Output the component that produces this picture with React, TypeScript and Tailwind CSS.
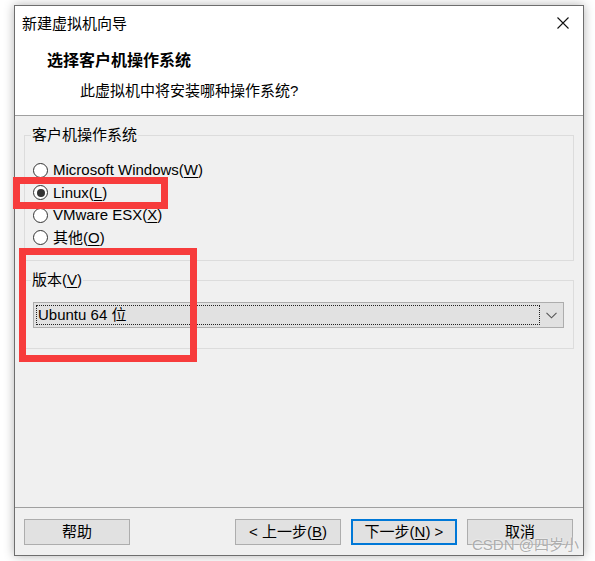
import type { ReactNode } from 'react'

const osOptions = [
  { label: 'Microsoft Windows', key: 'W', checked: false },
  { label: 'Linux', key: 'L', checked: true },
  { label: 'VMware ESX', key: 'X', checked: false },
  { label: '其他', key: 'O', checked: false },
] as const

function Accel({ k }: { k: string }) {
  return (
    <>
      (<span className="underline underline-offset-2">{k}</span>)
    </>
  )
}

function Radio({ checked }: { checked: boolean }) {
  return (
    <span className="flex h-[15px] w-[15px] shrink-0 items-center justify-center rounded-full border border-[#333333] bg-white">
      {checked && <span className="h-[8px] w-[8px] rounded-full bg-[#333333]" />}
    </span>
  )
}

function Button({ children, primary = false }: { children: ReactNode; primary?: boolean }) {
  return (
    <button
      className={
        primary
          ? 'flex h-[26px] w-[106px] items-center justify-center border-2 border-[#0078d7] bg-[#e1e1e1] text-[15px] leading-[20px] text-black'
          : 'flex h-[26px] w-[106px] items-center justify-center border border-[#adadad] bg-[#e1e1e1] text-[15px] leading-[20px] text-black'
      }
    >
      {children}
    </button>
  )
}

export default function App() {
  return (
    <div className="relative h-[561px] w-[595px] overflow-hidden bg-white pl-[14px] pt-[5px] font-['Liberation_Sans','Noto_Sans_CJK_SC',sans-serif] text-black">
      <div className="flex h-[551px] w-[570px] flex-col border border-[#6e6e6e] bg-[#f0f0f0] shadow-[0_0_10px_rgba(0,0,0,0.3)]">
        {/* header */}
        <div className="h-[110px] shrink-0 border-b border-[#a0a0a0] bg-white">
          <div className="flex items-center justify-between pl-[7px] pr-[14px] pt-[8px]">
            <span className="text-[15px] leading-[20px]">新建虚拟机向导</span>
            <svg width="12" height="12" viewBox="0 0 12 12" className="mt-[-2px]">
              <path d="M0.5 0.5 L11.5 11.5 M11.5 0.5 L0.5 11.5" stroke="#111" strokeWidth="1.1" fill="none" />
            </svg>
          </div>
          <div className="mt-[17px] pl-[32px] text-[16px] font-bold leading-[20px]">选择客户机操作系统</div>
          <div className="mt-[10px] pl-[65px] text-[15px] leading-[20px]">此虚拟机中将安装哪种操作系统?</div>
        </div>

        {/* body */}
        <div className="flex flex-1 flex-col px-[9px] pt-[9px]">
          <fieldset className="h-[136px] border border-[#dcdcdc]">
            <legend className="ml-[6px] px-[1px] text-[15px] leading-[20px]">客户机操作系统</legend>
            <div className="mt-[14px] flex flex-col pl-[8px]">
              {osOptions.map((o) => (
                <div key={o.key} className="flex h-[22.5px] items-center gap-[5px] text-[15px] leading-[20px]">
                  <Radio checked={o.checked} />
                  <span>
                    {o.label}
                    <Accel k={o.key} />
                  </span>
                </div>
              ))}
            </div>
          </fieldset>

          <fieldset className="mt-[9px] h-[79px] border border-[#dcdcdc]">
            <legend className="ml-[6px] px-[1px] text-[15px] leading-[20px]">
              版本<Accel k="V" />
            </legend>
            <div className="ml-[8px] mr-[9px] mt-[12px] flex h-[26px] items-center border border-[#adadad] bg-[#e1e1e1] pl-[2px]">
              <div className="flex h-[20px] flex-1 items-center border border-dotted border-[#222] pl-[1px] text-[15px] leading-[20px]">
                Ubuntu 64 位
              </div>
              <div className="flex w-[23px] items-center justify-center">
                <svg width="11" height="7" viewBox="0 0 11 7">
                  <path d="M0.5 0.8 L5.5 5.8 L10.5 0.8" stroke="#555" strokeWidth="1.1" fill="none" />
                </svg>
              </div>
            </div>
          </fieldset>
        </div>

        {/* footer */}
        <div className="flex h-[48px] shrink-0 items-start border-t border-[#a0a0a0] pl-[9px] pr-[10px] pt-[11px]">
          <Button>帮助</Button>
          <div className="ml-auto flex gap-[10px]">
            <Button>
              &lt; 上一步<Accel k="B" />
            </Button>
            <Button primary>
              下一步<Accel k="N" /> &gt;
            </Button>
            <Button>取消</Button>
          </div>
        </div>
      </div>

      {/* annotations */}
      <div className="absolute left-[13px] top-[177px] h-[32px] w-[155px] border-[7px] border-[#f73c3c]" />
      <div className="absolute left-[19px] top-[248px] h-[114px] w-[178px] border-[7px] border-[#f73c3c]" />
      <div className="absolute left-[472px] top-[536px] text-[15px] leading-[18px] text-[#9a9a9a]/80 [text-shadow:0_0_2px_#fff]">
        CSDN @四岁小
      </div>
    </div>
  )
}
